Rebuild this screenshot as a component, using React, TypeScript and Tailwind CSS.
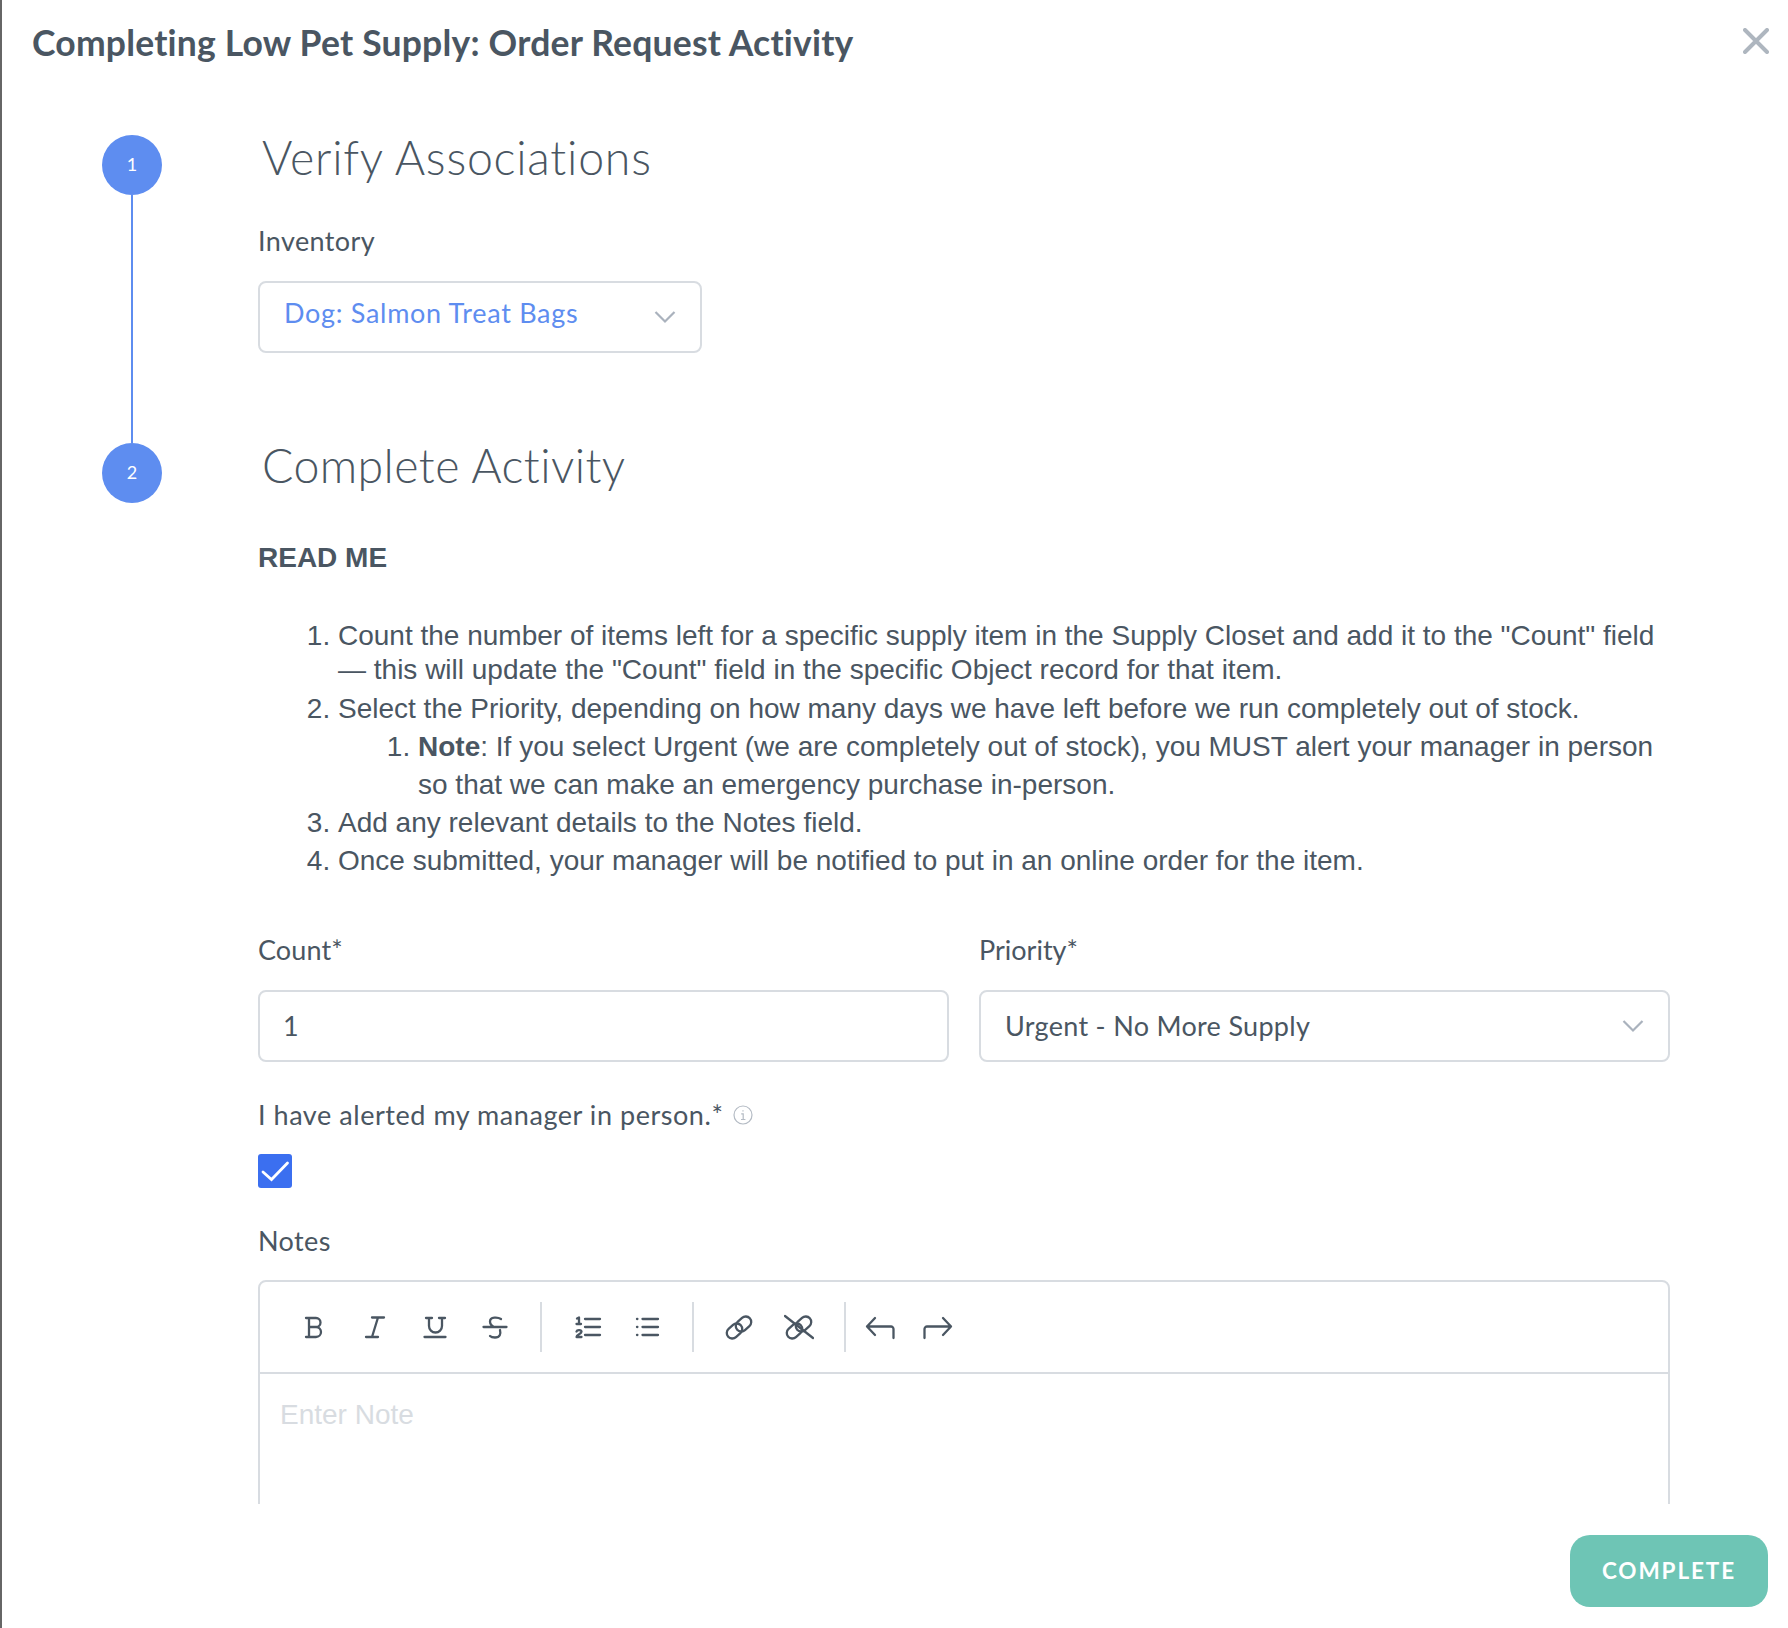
import type { ReactNode } from 'react';

const proxima = "font-['Lato',sans-serif]";
const arial = "font-['Liberation_Sans',Arial,sans-serif]";

function Chevron() {
  return (
    <svg width="22" height="14" viewBox="0 0 22 14" fill="none" stroke="#aab2bd" strokeWidth="2.2">
      <path d="M1.5 2 L11 11.5 L20.5 2" />
    </svg>
  );
}

function Tool({ children }: { children: ReactNode }) {
  return (
    <div className="w-[60px] h-[50px] flex items-center justify-center shrink-0">
      <svg width="30" height="30" viewBox="0 0 30 30" fill="none" stroke="#4a5662" strokeWidth="2.3" strokeLinecap="round" strokeLinejoin="round">
        {children}
      </svg>
    </div>
  );
}

function Divider() {
  return <div className="w-[2px] h-[50px] bg-[#d8dce1] shrink-0 mx-[15px]" />;
}

function ChainLinks() {
  return (
    <>
      <rect x="2" y="13.5" width="17" height="11" rx="5.5" transform="rotate(-42 10.5 19)" />
      <rect x="11" y="6.5" width="17" height="11" rx="5.5" transform="rotate(-42 19.5 12)" />
    </>
  );
}

export default function App() {
  return (
    <div className={`w-[1788px] h-[1628px] bg-white border-l-2 border-[#666] flex flex-col overflow-hidden text-[#4a5662] ${proxima}`}>
      {/* Header */}
      <div className="h-[84px] flex items-center justify-between pl-[30px] pr-[19px] shrink-0">
        <h1 className="text-[35.5px] font-bold tracking-[0.2px] mt-[2px]">Completing Low Pet Supply: Order Request Activity</h1>
        <svg className="-mt-[2px]" width="26" height="26" viewBox="0 0 26 26" fill="none" stroke="#aeb6bf" strokeWidth="4" strokeLinecap="round">
          <path d="M2 2 L24 24 M24 2 L2 24" />
        </svg>
      </div>

      {/* Body */}
      <div className="h-[1420px] flex overflow-hidden shrink-0">
        {/* Stepper */}
        <div className="w-[60px] ml-[100px] mt-[51px] flex flex-col items-center shrink-0">
          <div className="w-[60px] h-[60px] rounded-full bg-[#5e8df0] text-white flex items-center justify-center text-[18px] pb-[2px]">1</div>
          <div className="w-[2px] h-[248px] bg-[#5e8df0]" />
          <div className="w-[60px] h-[60px] rounded-full bg-[#5e8df0] text-white flex items-center justify-center text-[18px] pb-[2px]">2</div>
        </div>

        <div className="w-[1412px] ml-[96px] shrink-0">
          <h2 className="mt-[43px] ml-[4px] text-[46.5px] leading-[60px] font-light tracking-[0.75px]">Verify Associations</h2>
          <div className="mt-[38px] text-[27px] leading-[32px] tracking-[0.4px]">Inventory</div>
          <div className="mt-[24px] w-[444px] h-[72px] border-2 border-[#d8dce1] rounded-[8px] flex items-center justify-between px-[24px]">
            <span className="text-[27px] tracking-[0.7px] text-[#5e8df0] -mt-[8px]">Dog: Salmon Treat Bags</span>
            <Chevron />
          </div>

          <h2 className="mt-[82px] ml-[4px] text-[46.5px] leading-[60px] font-light tracking-[0.4px]">Complete Activity</h2>

          <div className={`${arial} text-[28px]`}>
            <div className="mt-[45px] font-bold leading-[36px]">READ ME</div>
            <ol className="mt-[43px] list-decimal pl-[80px]">
              <li className="leading-[34px] mb-[3px]">
                Count the number of items left for a specific supply item in the Supply Closet and add it to the "Count" field — this will update the "Count" field in the specific Object record for that item.
              </li>
              <li className="leading-[38px]">
                Select the Priority, depending on how many days we have left before we run completely out of stock.
                <ol className="list-decimal pl-[80px]">
                  <li className="leading-[38px]">
                    <b>Note</b>: If you select Urgent (we are completely out of stock), you MUST alert your manager in person so that we can make an emergency purchase in-person.
                  </li>
                </ol>
              </li>
              <li className="leading-[38px]">Add any relevant details to the Notes field.</li>
              <li className="leading-[38px]">Once submitted, your manager will be notified to put in an online order for the item.</li>
            </ol>
          </div>

          {/* Count + Priority */}
          <div className="mt-[54px] grid grid-cols-2 gap-x-[30px]">
            <div>
              <div className="text-[27px] leading-[32px] tracking-[0.1px]">Count*</div>
              <div className="mt-[24px] h-[72px] border-2 border-[#d8dce1] rounded-[8px] flex items-center px-[23px] text-[27px]">1</div>
            </div>
            <div>
              <div className="text-[27px] leading-[32px]">Priority*</div>
              <div className="mt-[24px] h-[72px] border-2 border-[#d8dce1] rounded-[8px] flex items-center justify-between pl-[24px] pr-[24px] text-[27px] tracking-[0.3px]">
                <span>Urgent - No More Supply</span>
                <Chevron />
              </div>
            </div>
          </div>

          <div className="mt-[37px] flex items-center text-[27px] leading-[32px] tracking-[0.55px]">
            I have alerted my manager in person.*
            <svg className="ml-[10px]" width="20" height="20" viewBox="0 0 20 20" fill="none" stroke="#b4bbc4" strokeWidth="1.2">
              <circle cx="10" cy="10" r="9" />
              <path d="M8.2 8.8 H10.2 V14.5 M8 14.5 H12.4 M10 5.2 V6.4" />
            </svg>
          </div>

          <div className="mt-[23px] w-[34px] h-[34px] rounded-[3px] bg-[#3b6ff0] flex items-center justify-center">
            <svg width="34" height="34" viewBox="0 0 34 34" fill="none" stroke="#fff" strokeWidth="2.8" strokeLinecap="round">
              <path d="M5 18 L13.5 25.5 L29.5 9" />
            </svg>
          </div>

          <div className="mt-[37px] text-[27px] leading-[32px] tracking-[0.4px]">Notes</div>

          {/* Notes editor, cut off by the footer */}
          <div className="mt-[23px] h-[300px] border-2 border-[#d8dce1] rounded-t-[8px]">
            <div className="h-[92px] border-b-2 border-[#d8dce1] flex items-center pl-[25px]">
              <Tool><path d="M6 6 H16 a4.5 4.5 0 0 1 0 9 H9 M16 15 a5 5 0 0 1 0 10 H6 M9 6 V25" /></Tool>
              <Tool><path d="M12 5.5 H24 M6 25 H18 M18 5.5 L12 25" /></Tool>
              <Tool><path d="M9 6 V14 a6.5 6.5 0 0 0 13 0 V6 M6 6 H12 M19 6 H25 M4.5 25 H25.5" /></Tool>
              <Tool><path d="M3.5 15 H26.5 M21 7 C18 5 10 4.5 10 9.5 C10 12 12 14 14 15 M20 18 C21 22 20 25.5 15 25.5 C13 25.5 11 25 10 24" /></Tool>
              <Divider />
              <Tool><path d="M13 7 H28 M13 15 H28 M13 23 H28 M5 6.5 L7 5.5 V12 M4.5 12 H9 M4.5 19.5 C5 17.5 9.5 17.5 9.5 19.8 C9.5 22 4.5 22.5 4.5 25 H9.5" /></Tool>
              <Tool><path d="M10.5 7 H26 M10.5 15 H26 M10.5 23 H26 M5 7 H5.4 M5 15 H5.4 M5 23 H5.4" /></Tool>
              <Divider />
              <Tool><ChainLinks /></Tool>
              <Tool><ChainLinks /><path d="M1 4 L29 26" /></Tool>
              <Divider />
              <div className="-ml-[11px] flex -space-x-[2px]">
                <Tool><path d="M10 6 L2 14.5 L10 23 M2 14.5 H26 a2.5 2.5 0 0 1 2.5 2.5 V26" /></Tool>
                <Tool><path d="M20 6 L28 14.5 L20 23 M28 14.5 H4 a2.5 2.5 0 0 0 -2.5 2.5 V26" /></Tool>
              </div>
            </div>
            <div className={`${arial} text-[28px] text-[#d8dce1] pl-[20px] pt-[20px]`}>Enter Note</div>
          </div>
        </div>
      </div>

      {/* Footer */}
      <div className="flex-1 flex justify-end items-start pt-[31px] pr-[20px]">
        <button className="w-[198px] h-[72px] rounded-[20px] bg-[#6ec5b5] text-white text-[22.5px] font-bold tracking-[1.9px]">COMPLETE</button>
      </div>
    </div>
  );
}
